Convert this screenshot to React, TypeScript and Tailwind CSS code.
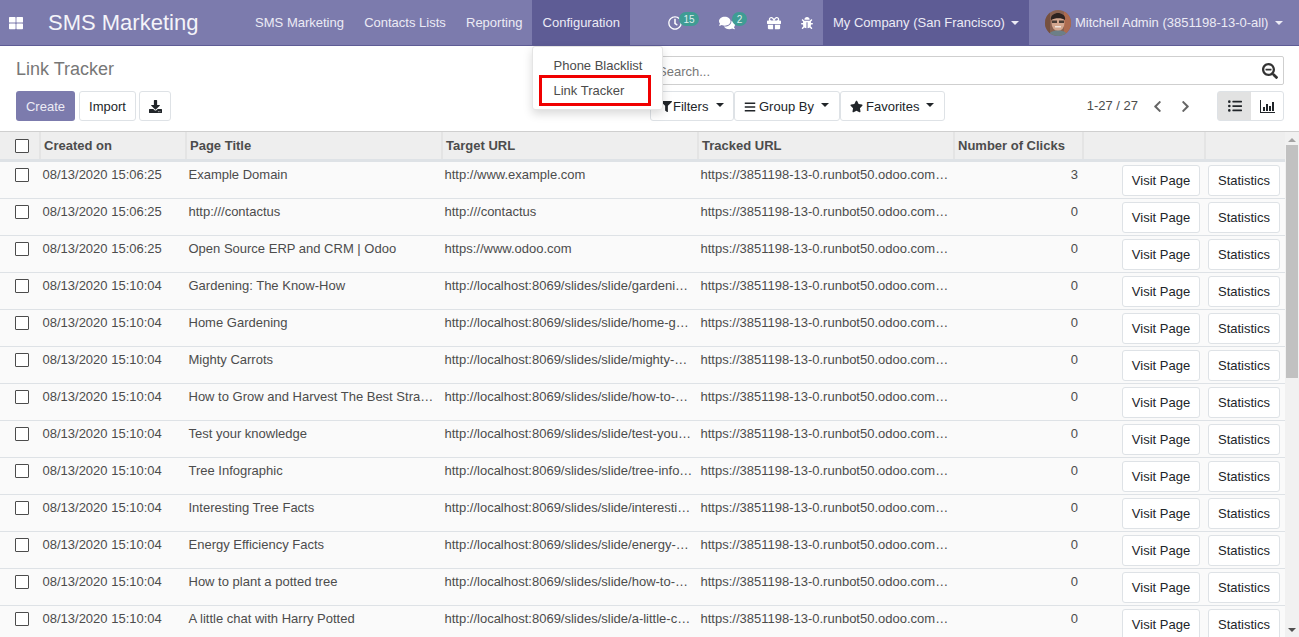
import { FaBug, FaDownload, FaFilter, FaGift, FaListUl, FaStar, FaThLarge, FaBars, FaChevronLeft, FaChevronRight, FaComments, FaSearchMinus, FaRegClock } from "react-icons/fa";

type Row = { created: string; title: string; target: string; clicks: number };

const TRACKED = "https://3851198-13-0.runbot50.odoo.com/r/abcd";

const rows: Row[] = [
  { created: "08/13/2020 15:06:25", title: "Example Domain", target: "http://www.example.com", clicks: 3 },
  { created: "08/13/2020 15:06:25", title: "http:///contactus", target: "http:///contactus", clicks: 0 },
  { created: "08/13/2020 15:06:25", title: "Open Source ERP and CRM | Odoo", target: "https://www.odoo.com", clicks: 0 },
  { created: "08/13/2020 15:10:04", title: "Gardening: The Know-How", target: "http://localhost:8069/slides/slide/gardening-the-know-how", clicks: 0 },
  { created: "08/13/2020 15:10:04", title: "Home Gardening", target: "http://localhost:8069/slides/slide/home-gardening", clicks: 0 },
  { created: "08/13/2020 15:10:04", title: "Mighty Carrots", target: "http://localhost:8069/slides/slide/mighty-carrots", clicks: 0 },
  { created: "08/13/2020 15:10:04", title: "How to Grow and Harvest The Best Strawberries", target: "http://localhost:8069/slides/slide/how-to-grow", clicks: 0 },
  { created: "08/13/2020 15:10:04", title: "Test your knowledge", target: "http://localhost:8069/slides/slide/test-your-knowledge", clicks: 0 },
  { created: "08/13/2020 15:10:04", title: "Tree Infographic", target: "http://localhost:8069/slides/slide/tree-infographic", clicks: 0 },
  { created: "08/13/2020 15:10:04", title: "Interesting Tree Facts", target: "http://localhost:8069/slides/slide/interesting-tree-facts", clicks: 0 },
  { created: "08/13/2020 15:10:04", title: "Energy Efficiency Facts", target: "http://localhost:8069/slides/slide/energy-efficiency-facts", clicks: 0 },
  { created: "08/13/2020 15:10:04", title: "How to plant a potted tree", target: "http://localhost:8069/slides/slide/how-to-plant", clicks: 0 },
  { created: "08/13/2020 15:10:04", title: "A little chat with Harry Potted", target: "http://localhost:8069/slides/slide/a-little-chat", clicks: 0 },
];

const COLS = "grid grid-cols-[39px_146px_256px_256px_256px_129px_122px_81px]";

function Caret({ className = "" }: { className?: string }) {
  return <span className={`inline-block w-0 h-0 border-x-[4px] border-x-transparent border-t-[4px] border-t-current ${className}`} />;
}

function Check() {
  return <span className="block w-[14px] h-[14px] border border-[#4c4c4c] bg-white rounded-[1px]" />;
}

function Avatar() {
  return (
    <svg width="26" height="26" viewBox="0 0 26 26" className="rounded-full">
      <rect width="26" height="26" fill="#8a6250" />
      <rect x="19" width="7" height="26" fill="#ad6b4f" />
      <rect width="5" height="26" fill="#75503f" />
      <ellipse cx="13" cy="13" rx="6.5" ry="8" fill="#d3a78f" />
      <path d="M6 10c-1-5 4-7 7-7s8 2 7 7c-3-2.500-10-2.500-14 0z" fill="#2d2320" />
      <rect x="7" y="10.500" width="5" height="2.500" fill="#4a3d35" />
      <rect x="14" y="10.500" width="5" height="2.500" fill="#4a3d35" />
      <rect x="10" y="16" width="6" height="1.500" fill="#f0e4dc" />
      <path d="M3 26c1-4 5-5.500 10-5.500s9 1.500 10 5.500z" fill="#6c7f88" />
    </svg>
  );
}

function BarsIcon() {
  return (
    <svg width="15" height="13" viewBox="0 0 15 13" fill="currentColor">
      <rect x="0" y="0" width="1" height="13" />
      <rect x="0" y="12" width="15" height="1" />
      <rect x="3" y="7" width="2" height="4" />
      <rect x="6" y="4" width="2" height="7" />
      <rect x="9" y="6" width="2" height="5" />
      <rect x="12" y="2" width="2" height="9" />
    </svg>
  );
}

function NavItem({ label, active }: { label: string; active?: boolean }) {
  return (
    <div className={`h-full flex items-center px-[10.1px] ${active ? "bg-[#5E5C95]" : ""}`}>{label}</div>
  );
}

function Badge({ n, className }: { n: number; className: string }) {
  return (
    <span className={`absolute flex items-center justify-center h-[14px] rounded-full bg-[#3F9C94] text-[10px] text-[#dfeeee] ${className}`}>{n}</span>
  );
}

export default function App() {
  return (
    <div className="relative w-[1299px] h-[637px] overflow-hidden bg-white font-['Liberation_Sans',sans-serif] text-[13px] text-[#4c4c4c] flex flex-col">
      {/* navbar */}
      <header className="h-[46px] shrink-0 flex items-center bg-[#7C7BAD] border-b border-[#5E5C95] text-[#ecebf5]">
        <FaThLarge className="ml-[9px] w-[14px] h-[14px] text-white" />
        <div className="ml-[25px] text-[22px] text-[#f4f4f9] w-[197px]">SMS Marketing</div>
        <nav className="h-full flex items-center">
          <NavItem label="SMS Marketing" />
          <NavItem label="Contacts Lists" />
          <NavItem label="Reporting" />
          <NavItem label="Configuration" active />
        </nav>
        <div className="h-full flex items-center ml-auto">
          <div className="relative w-[51px] h-full flex items-center">
            <FaRegClock className="w-[14px] h-[14px] text-white" />
            <Badge n={15} className="left-[11px] top-[12px] w-[20px]" />
          </div>
          <div className="relative w-[48px] h-full flex items-center">
            <FaComments className="w-[16px] h-[16px] text-white" />
            <Badge n={2} className="left-[13px] top-[12px] w-[15px]" />
          </div>
          <div className="w-[34px] h-full flex items-center">
            <FaGift className="w-[14px] h-[14px] text-white" />
          </div>
          <div className="w-[22px] h-full flex items-center">
            <FaBug className="w-[12px] h-[12px] text-white" />
          </div>
          <div className="h-full w-[206px] flex items-center pl-[10px] bg-[#5E5C95]">
            My Company (San Francisco)
            <Caret className="ml-[6px]" />
          </div>
          <div className="h-full w-[270px] flex items-center pl-[16px]">
            <Avatar />
            <span className="ml-[4px]">Mitchell Admin (3851198-13-0-all)</span>
            <Caret className="ml-[7px]" />
          </div>
        </div>
      </header>

      {/* control panel */}
      <section className="h-[86px] shrink-0 px-[15px] pt-[10px] border-b border-[#cfcfcf] flex flex-col">
        <div className="flex items-start justify-between h-[35px]">
          <div className="text-[18px] text-[#777] pl-px">Link Tracker</div>
          <div className="w-[635px] h-[29px] border border-[#cfcfcf] rounded-[2px] flex items-center pl-[8px] pr-[5px] text-[#777]">
            <span className="pt-[2px]">Search...</span>
            <FaSearchMinus className="ml-auto w-[16px] h-[16px] text-[#333]" />
          </div>
        </div>
        <div className="flex items-center h-[30px] whitespace-nowrap">
          <button className="ml-px h-[30px] pt-px w-[59px] rounded-[3px] bg-[#7C7BAD] text-[#ecebf5]">Create</button>
          <button className="ml-[4px] h-[30px] pt-px w-[57px] rounded-[3px] border border-[#dee2e6] text-[#212529]">Import</button>
          <button className="ml-[3px] h-[30px] w-[32px] rounded-[3px] border border-[#dee2e6] flex items-center justify-center text-[#212529]">
            <FaDownload className="w-[13px] h-[13px]" />
          </button>
          <div className="ml-[479px] flex text-[#212529]">
            <button className="h-[30px] pt-px w-[84px] rounded-[3px] border border-[#dee2e6] flex items-center pl-[10px]">
              <FaFilter className="w-[11px] h-[11px] mr-[1px]" />Filters<Caret className="ml-[8px] -mt-[3px]" />
            </button>
            <button className="h-[30px] pt-px w-[106px] rounded-[3px] border border-[#dee2e6] flex items-center pl-[9px]">
              <FaBars className="w-[12px] h-[12px] mr-[3px]" />Group By<Caret className="ml-[7px] -mt-[3px]" />
            </button>
            <button className="h-[30px] pt-px w-[105px] rounded-[3px] border border-[#dee2e6] flex items-center pl-[9px]">
              <FaStar className="w-[13px] h-[13px] mr-[3px]" />Favorites<Caret className="ml-[7px] -mt-[3px]" />
            </button>
          </div>
          <div className="ml-auto flex items-center">
            <span className="text-[#4c4c4c]">1-27 / 27</span>
            <FaChevronLeft className="ml-[14px] w-[11px] h-[13px] text-[#666]" />
            <FaChevronRight className="ml-[17px] w-[11px] h-[13px] text-[#666]" />
            <div className="ml-[26px] flex h-[30px] rounded-[3px] border border-[#dee2e6]">
              <div className="w-[33px] bg-[#e2e2e2] flex items-center justify-center text-[#212529]">
                <FaListUl className="w-[14px] h-[14px]" />
              </div>
              <div className="w-[32px] flex items-center justify-center text-[#212529]">
                <BarsIcon />
              </div>
            </div>
          </div>
        </div>
      </section>

      {/* list */}
      <div className="flex flex-1 min-h-0">
        <div className="w-[1285px] shrink-0">
          <div className={`${COLS} h-[30px] bg-[#eeeeee] border-b-[3px] border-[#dee2e6] font-bold text-[#4c4c4c]`}>
            <div className="flex items-center pl-[15px]"><Check /></div>
            {["Created on", "Page Title", "Target URL", "Tracked URL", "Number of Clicks", "", ""].map((h, i) => (
              <div key={i} className="border-l-2 border-[#e4e4e4] pl-[3px] flex items-center">{h}</div>
            ))}
          </div>
          {rows.map((r, i) => (
            <div key={i} className={`${COLS} h-[37px] bg-[#fafafa] border-b border-[#dee2e6] leading-[15px]`}>
              <div className="pl-[15px] pt-[6px]"><Check /></div>
              <div className="pl-[3.5px] pt-[5px]">{r.created}</div>
              <div className="pl-[3.5px] pr-[2px] pt-[5px] truncate">{r.title}</div>
              <div className="pl-[3.5px] pr-[4px] pt-[5px] truncate">{r.target}</div>
              <div className="pl-[3.5px] pr-[4px] pt-[5px] truncate">{TRACKED}</div>
              <div className="pr-[4px] pt-[5px] text-right">{r.clicks}</div>
              <div className="pt-[3px] pl-[40px]">
                <button className="w-[78px] h-[31px] bg-white border border-[#dee2e6] rounded-[3px] text-[#212529]">Visit Page</button>
              </div>
              <div className="pt-[3px] pl-[4px]">
                <button className="w-[72px] h-[31px] bg-white border border-[#dee2e6] rounded-[3px] text-[#212529]">Statistics</button>
              </div>
            </div>
          ))}
        </div>
        {/* scrollbar */}
        <div className="w-[14px] flex flex-col items-center bg-[#f1f1f1]">
          <span className="mt-[6px] w-0 h-0 border-x-[4px] border-x-transparent border-b-[4px] border-b-[#a3a3a3]" />
          <div className="mt-[3px] w-[12px] h-[233px] bg-[#c1c1c1]" />
          <span className="mt-auto mb-[5px] w-0 h-0 border-x-[4px] border-x-transparent border-t-[4px] border-t-[#505050]" />
        </div>
      </div>

      {/* configuration dropdown */}
      <div className="absolute left-[532px] top-[46px] w-[131px] h-[64px] bg-white rounded-[3px] border border-[#e5e5e5] shadow-[0_4px_10px_rgba(0,0,0,0.15)] text-[#4c4c4c]">
        <div className="pl-[20.5px] pt-[10px] leading-[18px]">Phone Blacklist</div>
        <div className="absolute left-[6px] top-[28px] w-[112px] h-[31px] border-[3px] border-[#f00000] pl-[11.5px] flex items-center">Link Tracker</div>
      </div>
    </div>
  );
}
